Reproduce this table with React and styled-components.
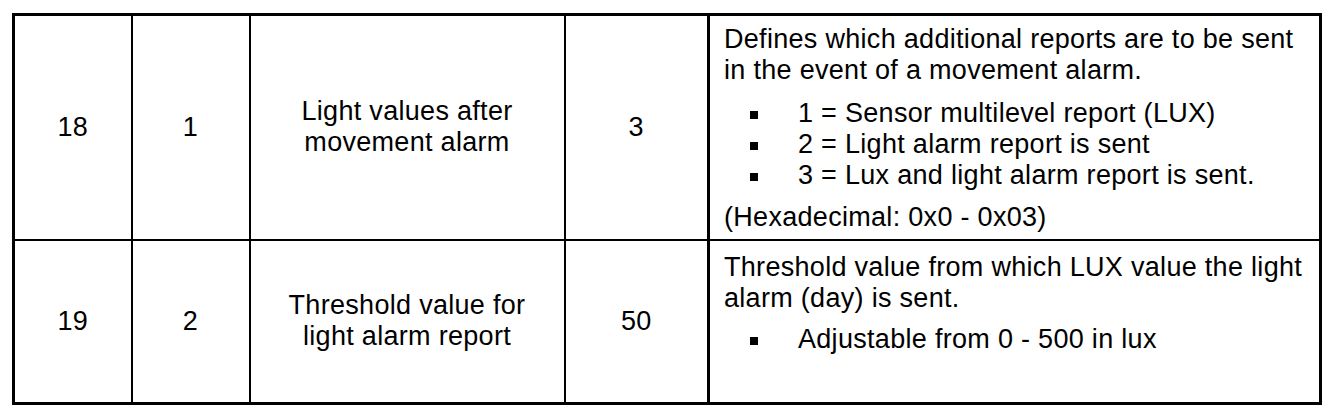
import React from "react";
import styled, { createGlobalStyle } from "styled-components";

const Global = createGlobalStyle`
  html, body { margin: 0; padding: 0; background: #ffffff; }
  body { font-family: "Liberation Sans", Arial, sans-serif; color: #000; }
`;

const Page = styled.div`
  padding: 13px 0 0 12px;
`;

const Table = styled.table`
  border-collapse: collapse;
  border: 3px solid #000;
  table-layout: fixed;
  width: 1307px;
  font-size: 27px;
  letter-spacing: 0.3px;
  line-height: 31px;
`;

const Row = styled.tr`
  height: ${(p) => p.$h}px;
`;

const Cell = styled.td`
  border: 2px solid #000;
  padding: 0;
  text-align: center;
  vertical-align: middle;
`;

const DescCell = styled.td`
  border: 2px solid #000;
  border-left-width: 3px;
  padding: ${(p) => p.$pt}px 10px 0 14px;
  text-align: left;
  vertical-align: top;
`;

const Para = styled.p`
  margin: 0;
`;

const List = styled.ul`
  list-style: none;
  margin: ${(p) => p.$mt}px 0 ${(p) => p.$mb}px 0;
  padding: 0;
`;

const Item = styled.li`
  position: relative;
  padding-left: 74px;
  &::before {
    content: "";
    position: absolute;
    left: 26px;
    top: 13px;
    width: 8px;
    height: 8px;
    background: #000;
  }
`;

export default function App() {
  return (
    <>
      <Global />
      <Page>
        <Table>
          <colgroup>
            <col style={{ width: 118 }} />
            <col style={{ width: 118 }} />
            <col style={{ width: 315 }} />
            <col style={{ width: 144 }} />
            <col style={{ width: 612 }} />
          </colgroup>
          <tbody>
            <Row $h={225}>
              <Cell>18</Cell>
              <Cell>1</Cell>
              <Cell>
                Light values after
                <br />
                movement alarm
              </Cell>
              <Cell>3</Cell>
              <DescCell $pt={8}>
                <Para>
                  Defines which additional reports are to be sent in the event of a movement alarm.
                </Para>
                <List $mt={12} $mb={11}>
                  <Item>1 = Sensor multilevel report (LUX)</Item>
                  <Item>2 = Light alarm report is sent</Item>
                  <Item>3 = Lux and light alarm report is sent.</Item>
                </List>
                <Para>(Hexadecimal: 0x0 - 0x03)</Para>
              </DescCell>
            </Row>
            <Row $h={164}>
              <Cell>19</Cell>
              <Cell>2</Cell>
              <Cell>
                Threshold value for
                <br />
                light alarm report
              </Cell>
              <Cell>50</Cell>
              <DescCell $pt={11}>
                <Para>
                  Threshold value from which LUX value the light alarm (day) is sent.
                </Para>
                <List $mt={10} $mb={0}>
                  <Item>Adjustable from 0 - 500 in lux</Item>
                </List>
              </DescCell>
            </Row>
          </tbody>
        </Table>
      </Page>
    </>
  );
}
